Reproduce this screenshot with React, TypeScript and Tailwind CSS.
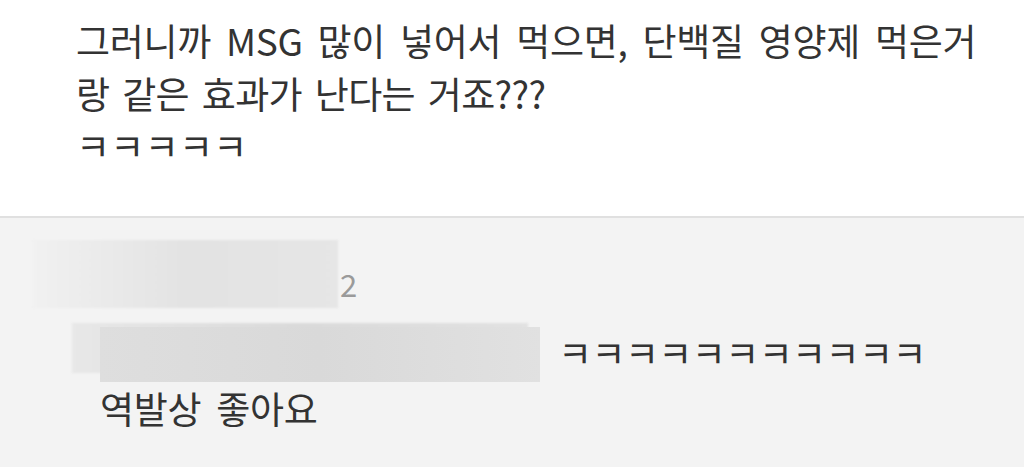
import React from "react";

const font = { fontFamily: '"Noto Sans CJK KR", "Noto Sans", sans-serif' };

export default function App() {
  return (
    <div className="w-[1024px] h-[467px] overflow-hidden bg-[#f3f3f3]" style={font}>
      <div className="bg-white h-[218px] border-b-2 border-[#e0e0e0] pl-[76px] pt-[14px]">
        <p className="text-[37px] leading-[53px] text-[#333] tracking-[-0.3px] [word-spacing:7px]">
          그러니까 MSG 많이 넣어서 먹으면, 단백질 영양제 먹은거
          <br />
          <span className="tracking-[-0.6px] [word-spacing:5px]">랑 같은 효과가 난다는 거죠???</span>
        </p>
        <p className="text-[37px] leading-[50px] text-[#333] tracking-[0.3px]">ㅋㅋㅋㅋㅋ</p>
      </div>
      <div className="relative pl-[33px] pt-[22px]">
        <div className="flex items-end gap-[2px]">
          <div className="w-[305px] h-[68px] bg-gradient-to-r from-[#f1f1f1] via-[#e3e3e3] to-[#e6e6e6] blur-[1px]" />
          <span className="text-[31px] leading-[31px] mb-[9px] text-[#9a9a9a]">2</span>
        </div>
        <div className="relative mt-[15px] ml-[39px] h-[60px] flex items-center">
          <div className="absolute left-0 top-0 w-[456px] h-[50px] bg-gradient-to-r from-[#e8e8e8] via-[#dadada] to-[#e2e2e2] blur-[1px]" />
          <div className="absolute left-[28px] top-[4px] w-[440px] h-[55px] bg-gradient-to-r from-[#dedede] via-[#d9d9d9] to-[#e1e1e1]" />
          <span className="absolute left-[486px] top-[4px] text-[37px] leading-[50px] text-[#333] tracking-[-0.6px]">ㅋㅋㅋㅋㅋㅋㅋㅋㅋㅋㅋ</span>
        </div>
        <p className="ml-[67px] mt-[0px] text-[37px] leading-[50px] text-[#333] tracking-[-0.3px] [word-spacing:7px]">역발상 좋아요</p>
      </div>
    </div>
  );
}
